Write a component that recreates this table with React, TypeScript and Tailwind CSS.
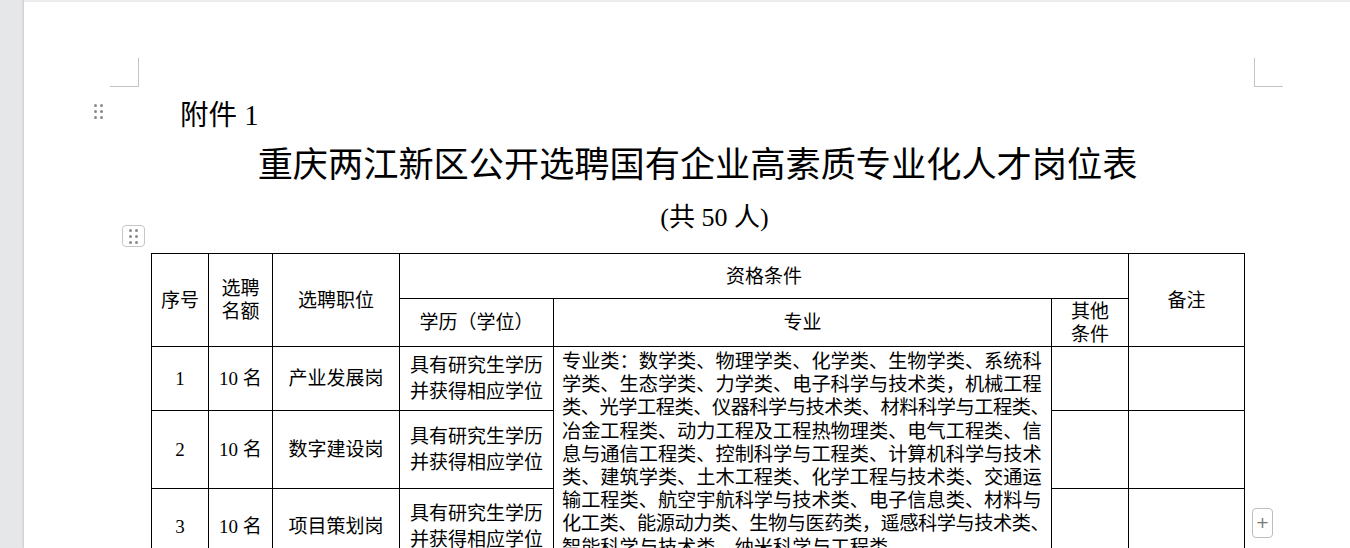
import React from "react";

// lines ending in 、 are squeezed a little, as the word processor does
const majorLines = [
  { t: "专业类：数学类、物理学类、化学类、生物学类、系统科", tight: false },
  { t: "学类、生态学类、力学类、电子科学与技术类，机械工程", tight: false },
  { t: "类、光学工程类、仪器科学与技术类、材料科学与工程类、", tight: true },
  { t: "冶金工程类、动力工程及工程热物理类、电气工程类、信", tight: false },
  { t: "息与通信工程类、控制科学与工程类、计算机科学与技术", tight: false },
  { t: "类、建筑学类、土木工程类、化学工程与技术类、交通运", tight: false },
  { t: "输工程类、航空宇航科学与技术类、电子信息类、材料与", tight: false },
  { t: "化工类、能源动力类、生物与医药类，遥感科学与技术类、", tight: true },
  { t: "智能科学与技术类、纳米科学与工程类", tight: false },
];

const rows = [
  { no: "1", post: "产业发展岗", h: "h-[64px]" },
  { no: "2", post: "数字建设岗", h: "h-[78px]" },
  { no: "3", post: "项目策划岗", h: "h-[76px]" },
];

const cell = "border border-black p-0 text-center align-middle";

function Dots({ className }: { className?: string }) {
  return (
    <div className={"grid grid-cols-2 gap-x-[3px] gap-y-[3px] " + (className ?? "")}>
      {Array.from({ length: 6 }).map((_, i) => (
        <span key={i} className="h-[3px] w-[3px] rounded-full bg-[#8a8a8a]" />
      ))}
    </div>
  );
}

export default function App() {
  return (
    <div className="flex h-[548px] w-[1350px] overflow-hidden bg-[#e6e7e9] font-['Liberation_Serif','Noto_Sans_CJK_SC',serif] text-black">
      <div className="w-[24px] shrink-0" />
      <div className="relative flex-1 border-t-2 border-[#ececec] bg-white shadow-[-1px_0_2px_rgba(0,0,0,0.12)]">
        {/* margin corner marks */}
        <div className="absolute left-[86px] top-[56px] h-[29px] w-[29px] border-r border-b border-[#c4c4c4]" />
        <div className="absolute left-[1230px] top-[56px] h-[29px] w-[29px] border-l border-b border-[#c4c4c4]" />

        {/* paragraph handle */}
        <Dots className="absolute left-[70px] top-[102px]" />

        {/* table handle */}
        <div className="absolute left-[98px] top-[223px] flex h-[22px] w-[23px] items-center justify-center rounded-[4px] border border-[#c6c6c6] bg-white">
          <Dots />
        </div>

        {/* add row button */}
        <div className="absolute left-[1228px] top-[506px] flex h-[30px] w-[21px] items-center justify-center rounded-[4px] border border-[#bdbdbd] bg-white font-['DejaVu_Sans',sans-serif] text-[16px] leading-none text-[#777]">
          +
        </div>

        <div className="ml-[127px] w-[1093px] pt-[100px]">
          <p className="pl-[29px] text-[28.5px] leading-[28px]">附件 1</p>
          <h1 className="mt-[18px] text-center text-[35.2px] leading-[35px]">
            重庆两江新区公开选聘国有企业高素质专业化人才岗位表
          </h1>
          <p className="mt-[22px] pl-[34px] text-center text-[26px] leading-[26px]">(共 50 人)</p>

          <table className="mt-[22px] w-[1093px] table-fixed border-collapse text-[19px] leading-[23px]">
            <colgroup>
              <col className="w-[57px]" />
              <col className="w-[64px]" />
              <col className="w-[127px]" />
              <col className="w-[154px]" />
              <col className="w-[498px]" />
              <col className="w-[77px]" />
              <col className="w-[116px]" />
            </colgroup>
            <tbody>
              <tr className="h-[45px]">
                <td rowSpan={2} className={cell}>序号</td>
                <td rowSpan={2} className={cell}>
                  选聘
                  <br />
                  名额
                </td>
                <td rowSpan={2} className={cell}>选聘职位</td>
                <td colSpan={3} className={cell}>资格条件</td>
                <td rowSpan={2} className={cell}>备注</td>
              </tr>
              <tr className="h-[48px]">
                <td className={cell}>学历（学位）</td>
                <td className={cell}>专业</td>
                <td className={cell}>
                  其他
                  <br />
                  条件
                </td>
              </tr>
              {rows.map((r, i) => (
                <tr key={r.no} className={r.h}>
                  <td className={cell}>{r.no}</td>
                  <td className={cell}>10 名</td>
                  <td className={cell}>{r.post}</td>
                  <td className={cell + " leading-[26px]"}>
                    具有研究生学历
                    <br />
                    并获得相应学位
                  </td>
                  {i === 0 && (
                    <td rowSpan={3} className="border border-black px-[8px] pt-[3px] text-left align-top text-[19.2px] leading-[23.2px]">
                      {majorLines.map((l) => (
                        <div key={l.t} className={l.tight ? "whitespace-nowrap tracking-[-0.45px]" : "whitespace-nowrap"}>
                          {l.t}
                        </div>
                      ))}
                    </td>
                  )}
                  <td className={cell} />
                  <td className={cell} />
                </tr>
              ))}
            </tbody>
          </table>
        </div>
      </div>
    </div>
  );
}
